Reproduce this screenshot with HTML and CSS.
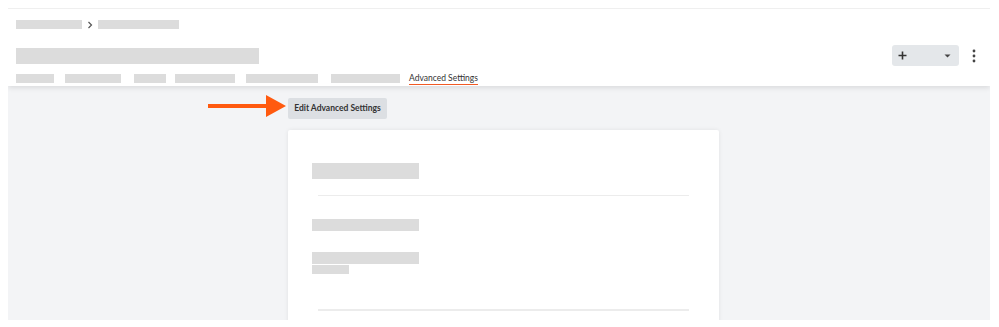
FILE: index.html
```html
<!DOCTYPE html>
<html lang="en">
  <head>
    <meta charset="UTF-8" />
    <meta name="viewport" content="width=device-width, initial-scale=1.0" />
    <title>Advanced Settings</title>
    <link rel="stylesheet" href="styles.css">
  </head>
  <body>
    <div class="app">
      <div class="header">
        <div class="crumbs">
          <span class="sk sk-crumb1"></span>
          <svg class="chev" width="6" height="8" viewBox="0 0 6 8"><path d="M1.5 1 L4.5 4 L1.5 7" fill="none" stroke="#555" stroke-width="1.2"/></svg>
          <span class="sk sk-crumb2"></span>
        </div>
        <div class="title-row">
          <span class="sk sk-title"></span>
          <div class="actions">
            <button class="split">
              <svg width="9" height="9" viewBox="0 0 9 9"><path d="M4.5 0.5 V8.5 M0.5 4.5 H8.5" stroke="#333" stroke-width="1.6"/></svg>
              <svg width="7" height="4" viewBox="0 0 7 4"><path d="M0.5 0.5 H6.5 L3.5 3.5 Z" fill="#444"/></svg>
            </button>
            <svg class="kebab" width="4" height="14" viewBox="0 0 4 14"><circle cx="2" cy="2" r="1.4" fill="#444"/><circle cx="2" cy="7" r="1.4" fill="#444"/><circle cx="2" cy="12" r="1.4" fill="#444"/></svg>
          </div>
        </div>
        <div class="tabs">
          <span class="sk tab" style="width: 38px; margin-right: 11px"></span>
          <span class="sk tab" style="width: 56px; margin-right: 13px"></span>
          <span class="sk tab" style="width: 32px; margin-right: 9px"></span>
          <span class="sk tab" style="width: 60px; margin-right: 11px"></span>
          <span class="sk tab" style="width: 72px; margin-right: 13px"></span>
          <span class="sk tab" style="width: 69px; margin-right: 9px"></span>
          <span class="tab-active">Advanced Settings</span>
        </div>
      </div>
      <div class="main">
        <div class="toolbar">
          <svg class="arrow" width="78" height="22" viewBox="0 0 78 22"><path d="M0 9 H58 V0 L78 11 L58 22 V13 H0 Z" fill="#ff5a0f"/></svg>
          <button class="edit-btn">Edit Advanced Settings</button>
        </div>
        <div class="card">
          <span class="sk sk-heading"></span>
          <div class="divider"></div>
          <span class="sk sk-line first"></span>
          <span class="sk sk-line"></span>
          <span class="sk sk-small"></span>
          <div class="divider low"></div>
        </div>
      </div>
    </div>
  </body>
</html>
```
FILE: styles.css
```css
body {
  margin: 8px;
  background-color: #fff;
  font-family: Lato, "Noto Sans", sans-serif;
}

.app {
  width: 982px;
  height: 311px;
  border-top: 1px solid #efefef;
  display: flex;
  flex-direction: column;
  overflow: hidden;
}

.sk {
  display: block;
  background-color: #dcdcdc;
}

.header {
  position: relative;
  z-index: 1;
  background-color: #fff;
  padding: 11px 0 0 8px;
  box-shadow: 0 2px 5px rgba(0, 0, 0, 0.1);
}

.crumbs {
  display: flex;
  align-items: center;
  height: 9px;
}

.sk-crumb1 {
  width: 66px;
  height: 9px;
}

.chev {
  margin: 0 5px 0 5px;
}

.sk-crumb2 {
  width: 81px;
  height: 9px;
}

.title-row {
  display: flex;
  justify-content: space-between;
  align-items: center;
  height: 21px;
  margin-top: 16px;
  padding-right: 14px;
}

.sk-title {
  width: 243px;
  height: 16px;
}

.actions {
  display: flex;
  align-items: center;
  gap: 13px;
}

.split {
  width: 67px;
  height: 21px;
  border: none;
  border-radius: 3px;
  background-color: #e4e7ea;
  display: flex;
  align-items: center;
  justify-content: space-between;
  padding: 0 8px 0 6px;
}

.kebab {
  margin-top: 1px;
}

.tabs {
  display: flex;
  align-items: flex-start;
  margin-top: 8px;
  height: 12px;
}

.tab {
  height: 9px;
}

.tab-active {
  font-size: 8.5px;
  color: #333;
  line-height: 10px;
  padding-bottom: 1px;
  border-bottom: 1.5px solid #f15a24;
  margin-top: -1px;
}

.main {
  flex: 1;
  background-color: #f3f4f6;
  padding: 9px 0 0 280px;
  overflow: hidden;
}

.toolbar {
  position: relative;
  height: 21px;
}

.arrow {
  position: absolute;
  left: -80px;
  top: 0;
}

.edit-btn {
  height: 21px;
  width: 99px;
  border: none;
  border-radius: 2px;
  background-color: #dcdfe3;
  font-family: Lato, "Noto Sans", sans-serif;
  font-weight: bold;
  font-size: 8.5px;
  color: #333;
  padding: 0;
}

.card {
  margin-top: 14px;
  width: 431px;
  height: 220px;
  background-color: #fff;
  border-radius: 2px;
  box-shadow: 0 0 4px rgba(0, 0, 0, 0.08);
  padding: 33px 0 0 24px;
  box-sizing: border-box;
}

.sk-heading {
  width: 107px;
  height: 16px;
}

.divider {
  width: 371px;
  height: 1px;
  background-color: #ececec;
  margin: 16px 0 0 6px;
}

.divider.low {
  height: 2px;
  margin-top: 35px;
}

.sk-line {
  width: 107px;
  height: 12px;
  margin-top: 21px;
}

.sk-line.first {
  margin-top: 23px;
}

.sk-small {
  width: 37px;
  height: 9px;
  margin-top: 1px;
}
```
